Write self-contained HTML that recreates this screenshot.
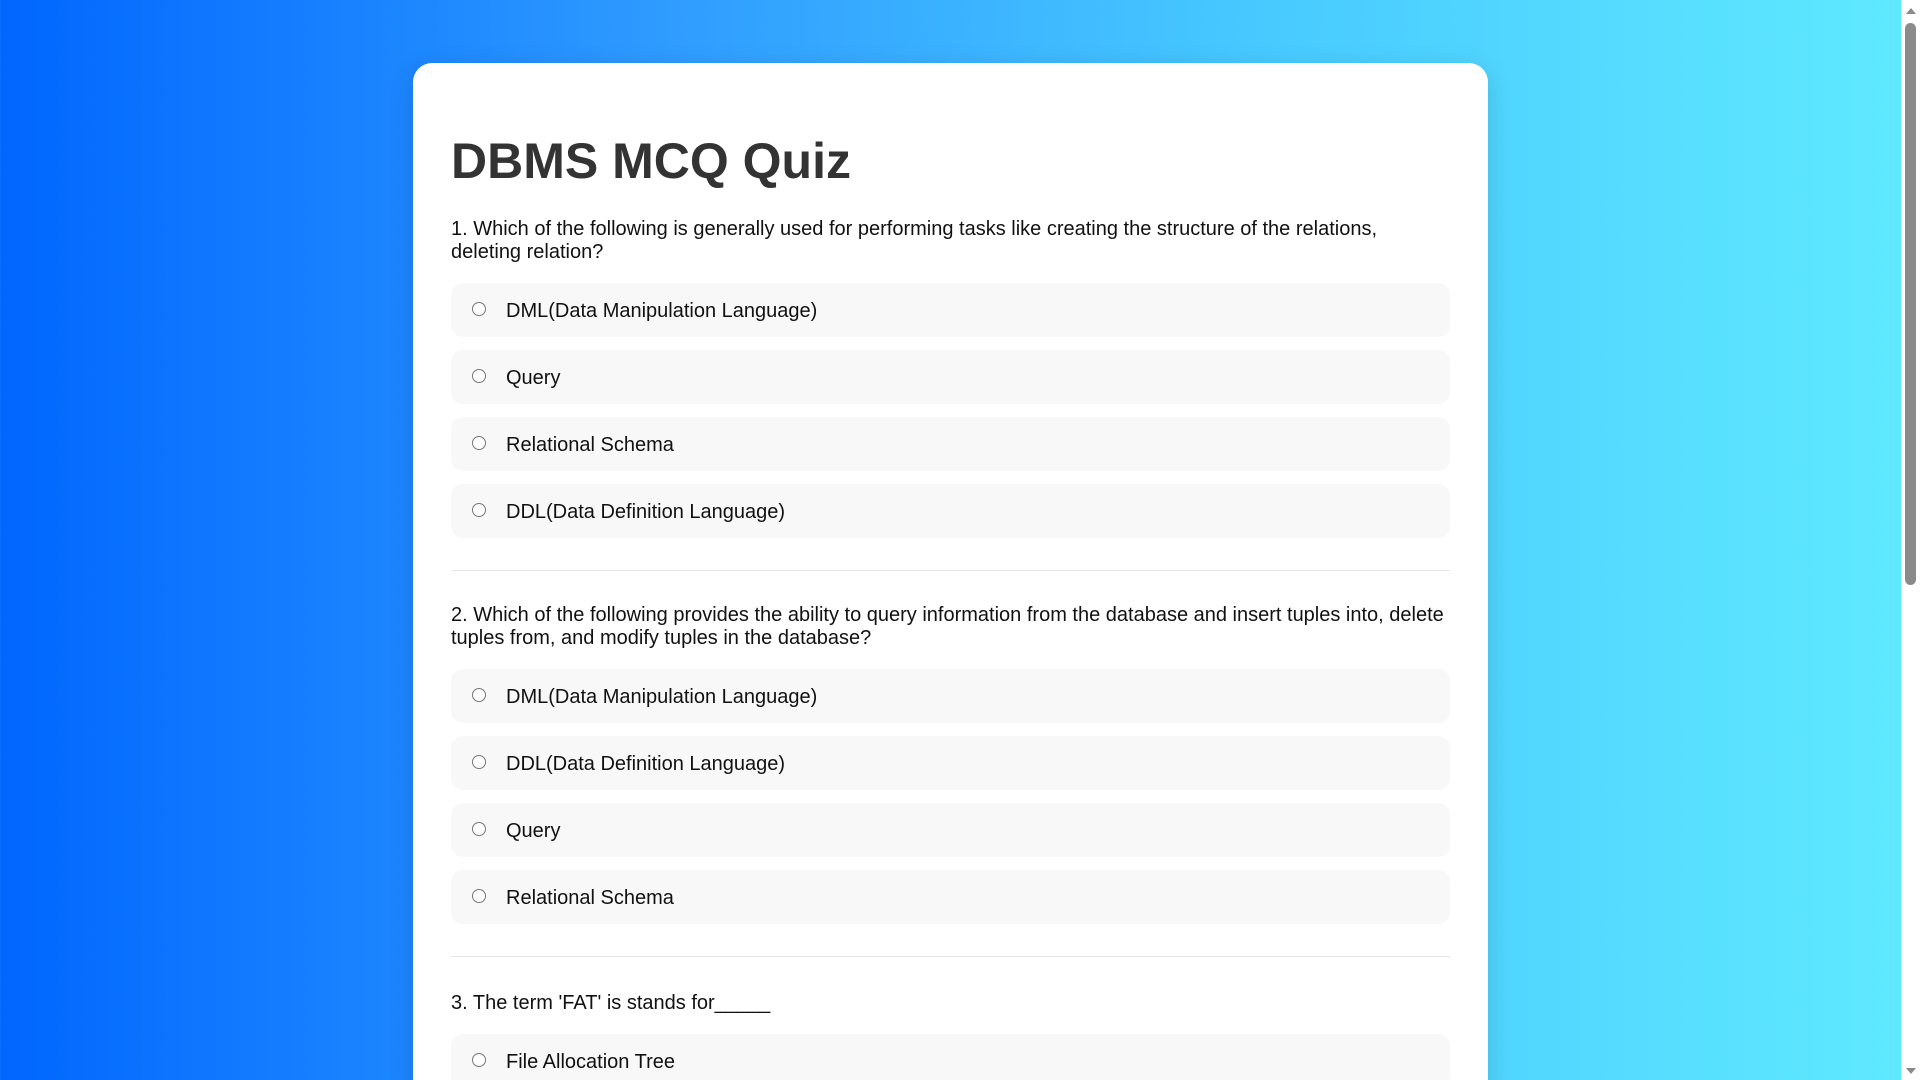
<!DOCTYPE html>
<html><head><meta charset="utf-8"><style>
html,body{margin:0;padding:0;height:1080px;overflow:hidden}
body{width:1920px;background:linear-gradient(90deg,#0066ff 0%,#2f9cff 35%,#47c9ff 65%,#60eaff 100%);font-family:"Liberation Sans",Arial,sans-serif;position:relative}
.card{position:absolute;left:413px;top:63px;width:1075px;height:1100px;background:#fff;border-radius:19px;box-shadow:0 6px 25px rgba(0,0,0,.15);box-sizing:border-box;padding:65px 38px 0 38px}
h1{margin:0;font-size:50px;line-height:67px;color:#333;font-weight:bold}
.q{font-size:20px;line-height:23px;color:#111;margin:23px 0 19px}
.opt{height:54px;background:#f8f8f8;border-radius:12px;margin-bottom:13px;position:relative;font-size:20px;color:#111}
.opt span{position:absolute;left:55px;top:17px;line-height:23px}
.opt i{position:absolute;left:21px;top:19px;width:12px;height:12px;border:1.5px solid #767676;border-radius:50%;background:#fff}
hr{border:0;border-top:1px solid #e6e6e6;margin:32px 0 0}
.sb{position:absolute;right:0;top:0;width:19px;height:1080px;background:#fff}
.th{position:absolute;left:4px;top:23px;width:11px;height:562px;background:#8a8a8a;border-radius:6px}
</style></head><body>
<div class="card">
<h1>DBMS MCQ Quiz</h1>
<div class="q">1. Which of the following is generally used for performing tasks like creating the structure of the relations, deleting relation?</div>
<div class="opt"><i></i><span>DML(Data Manipulation Language)</span></div>
<div class="opt"><i></i><span>Query</span></div>
<div class="opt"><i></i><span>Relational Schema</span></div>
<div class="opt"><i></i><span>DDL(Data Definition Language)</span></div>
<hr>
<div class="q" style="margin-top:33px">2. Which of the following provides the ability to query information from the database and insert tuples into, delete tuples from, and modify tuples in the database?</div>
<div class="opt"><i></i><span>DML(Data Manipulation Language)</span></div>
<div class="opt"><i></i><span>DDL(Data Definition Language)</span></div>
<div class="opt"><i></i><span>Query</span></div>
<div class="opt"><i></i><span>Relational Schema</span></div>
<hr>
<div class="q" style="margin-top:35px;margin-bottom:19px">3. The term 'FAT' is stands for_____</div>
<div class="opt"><i></i><span>File Allocation Tree</span></div>
</div>
<div class="sb"><div style="position:absolute;left:5px;top:8px;width:0;height:0;border-left:5px solid transparent;border-right:5px solid transparent;border-bottom:6px solid #8a8a8a"></div><div class="th"></div><div style="position:absolute;left:5px;bottom:6px;width:0;height:0;border-left:5px solid transparent;border-right:5px solid transparent;border-top:6px solid #8a8a8a"></div></div>
</body></html>
